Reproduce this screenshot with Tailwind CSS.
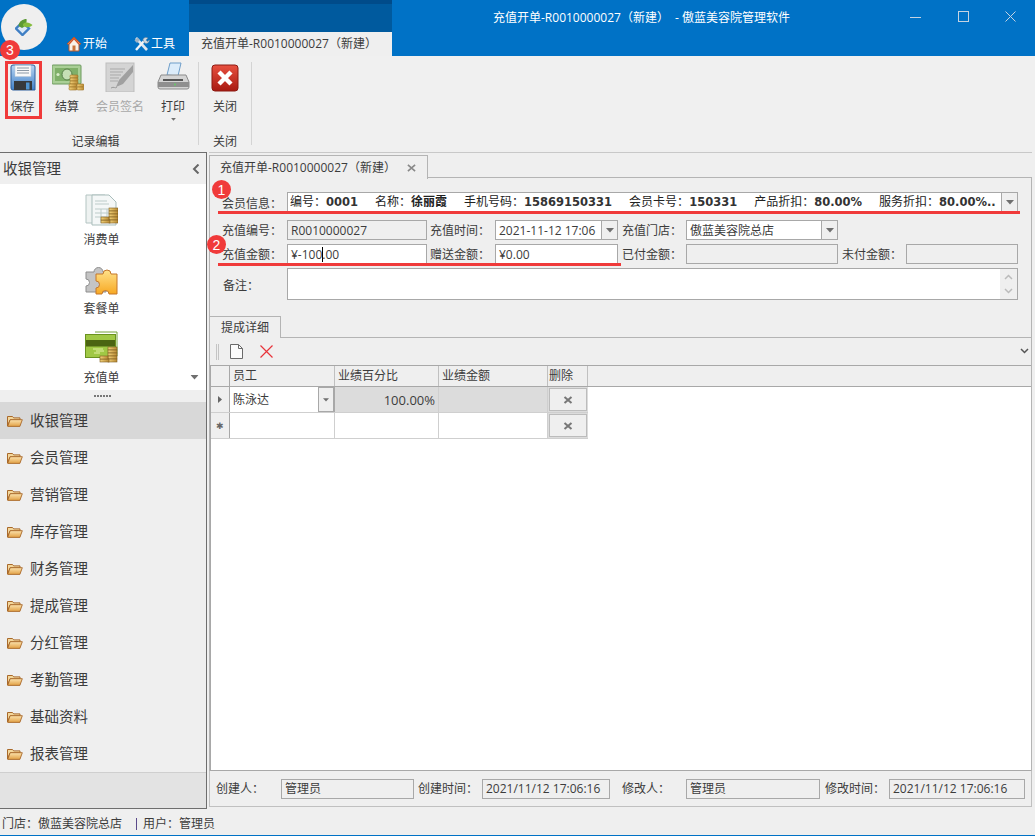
<!DOCTYPE html>
<html lang="zh-CN">
<head>
  <meta charset="UTF-8">
  <title>充值开单</title>
  <script src="https://cdn.jsdelivr.net/npm/@tailwindcss/browser@4"></script>
</head>
<body class="m-0">
  <!-- shared icons -->
  <svg class="absolute w-0 h-0">
    <defs>
      <linearGradient id="folderFront" x1="0" y1="0" x2="0" y2="1"><stop offset="0" stop-color="#fbe3ae"/><stop offset="1" stop-color="#e2a044"/></linearGradient>
      <linearGradient id="coin" x1="0" y1="0" x2="1" y2="0"><stop offset="0" stop-color="#f2d27a"/><stop offset="1" stop-color="#b98a34"/></linearGradient>
      <linearGradient id="floppy" x1="0" y1="0" x2="0" y2="1"><stop offset="0" stop-color="#b9d6f2"/><stop offset="1" stop-color="#3f7fc8"/></linearGradient>
      <linearGradient id="redBtn" x1="0" y1="0" x2="0" y2="1"><stop offset="0" stop-color="#e8503f"/><stop offset="1" stop-color="#a81a12"/></linearGradient>
      <linearGradient id="gold" x1="0" y1="0" x2="0" y2="1"><stop offset="0" stop-color="#ffe28a"/><stop offset="1" stop-color="#f7a823"/></linearGradient>
      <symbol id="folder" viewBox="0 0 16 12">
        <path d="M.5 1.5h5l1.2 1.4h6.3v2H3L.5 11z" fill="#f3d79c" stroke="#a9692a"/>
        <path d="M.7 11.4 3.2 4.7h12.1l-2.4 6.7z" fill="url(#folderFront)" stroke="#a9692a" stroke-width=".9"/>
      </symbol>
      <symbol id="dropArrow" viewBox="0 0 8 5"><path d="M0 0h8L4 4.5z" fill="#6f6f6f"/></symbol>
      <symbol id="rowX" viewBox="0 0 10 8"><path d="M1.5 1 8.5 7M8.5 1 1.5 7" stroke="#777" stroke-width="2"/></symbol>
    </defs>
  </svg>

  <div class="relative w-[1035px] h-[836px] overflow-hidden flex flex-col bg-[#efefef] text-[#3c3c3c] text-[12px] leading-[16px] font-['Open_Sans','Noto_Sans_CJK_SC',sans-serif]">

    <!-- title bar -->
    <div class="h-[56px] shrink-0 bg-[#0072c6] flex text-white">
      <div class="w-[189px] shrink-0 flex items-end pb-[1px]">
        <div class="ml-[66px] w-[67px] h-[22px] flex items-center gap-[1px]">
          <svg class="w-[16px] h-[16px]" viewBox="0 0 16 16">
            <path d="M8 1 1 8h2v7h10V8h2z" fill="#f7f3ea" stroke="#b5562a"/>
            <path d="M3 8 8 2.5 13 8" fill="none" stroke="#d2552a" stroke-width="1.6"/>
            <rect x="6.5" y="9.5" width="3" height="5.5" fill="#c9743a"/>
          </svg>
          <span>开始</span>
        </div>
        <div class="w-[56px] h-[22px] flex items-center gap-[1px]">
          <svg class="w-[17px] h-[16px]" viewBox="0 0 17 16">
            <path d="M3 2 14 14" stroke="#dfe6ee" stroke-width="2.6"/>
            <path d="M1.5 4.5 4.5 1.5 7 4 4 7z" fill="#9fb4c6"/>
            <path d="M3 14 11 5" stroke="#f0f4f8" stroke-width="2.4"/>
            <path d="M10 3.5a3.2 3.2 0 0 1 5-1.4l-2 2 1.4 1.4 2-1.5a3.2 3.2 0 0 1-5 2.8z" fill="#cfd9e2" stroke="#6d8193" stroke-width=".5"/>
          </svg>
          <span>工具</span>
        </div>
      </div>
      <div class="w-[203px] shrink-0 flex flex-col">
        <div class="h-[4px] bg-[#004b8a]"></div>
        <div class="h-[28px] bg-[#005a9e]"></div>
        <div class="h-[24px] bg-[#efefef] text-[#3c3c3c] pl-[12px] flex items-center">充值开单-R0010000027（新建）</div>
      </div>
      <div class="flex-1 relative">
        <div class="pl-[101px] pt-[10px] whitespace-pre">充值开单-R0010000027（新建）  - 傲蓝美容院管理软件</div>
      </div>
      <div class="absolute top-0 right-0 flex">
        <div class="w-[50px] h-[32px] flex items-center justify-center"><svg class="w-[11px] h-[11px]" viewBox="0 0 11 11"><path d="M0 6.5h11" stroke="#c5d3e2"/></svg></div>
        <div class="w-[46px] h-[32px] flex items-center justify-center"><svg class="w-[11px] h-[11px]" viewBox="0 0 11 11"><rect x=".5" y=".5" width="10" height="10" fill="none" stroke="#c5d3e2"/></svg></div>
        <div class="w-[49px] h-[32px] flex items-center justify-center"><svg class="w-[11px] h-[11px]" viewBox="0 0 11 11"><path d="M.5.5l10 10M10.5.5l-10 10" stroke="#c5d3e2"/></svg></div>
      </div>
    </div>

    <!-- ribbon -->
    <div class="h-[94px] shrink-0 flex bg-[#f0f0f0] relative">
      <div class="w-[199px] shrink-0 flex flex-col border-r border-[#d4d4d4] mb-[5px] mt-[6px]">
        <div class="flex h-[72px] shrink-0">
          <div class="w-[44px] flex flex-col items-center pl-[1px] pt-[2px]">
            <svg class="w-[28px] h-[28px]" viewBox="0 0 28 28">
              <path d="M2 3a2 2 0 0 1 2-2h20a2 2 0 0 1 2 2v23H4a2 2 0 0 1-2-2z" fill="url(#floppy)" stroke="#2f5f9c"/>
              <rect x="6" y="1.5" width="16" height="11" fill="#f8f8f8" stroke="#b9c7d6" stroke-width=".5"/>
              <path d="M8 4h12M8 6.5h12M8 9h12" stroke="#8c99a6"/>
              <rect x="5" y="17" width="18" height="9" fill="#37393c"/>
              <rect x="17" y="18.5" width="3.5" height="7" fill="#4f93cf"/>
            </svg>
            <span class="mt-[7px]">保存</span>
          </div>
          <div class="w-[46px] flex flex-col items-center pt-[2px]">
            <svg class="w-[32px] h-[28px] ml-[2px]" viewBox="0 0 32 28">
              <rect x="0" y="1" width="29" height="19" rx="1" fill="#a9cf96" stroke="#6c9a5e"/>
              <rect x="3" y="4" width="23" height="13" fill="#7fb069"/>
              <ellipse cx="15" cy="10.5" rx="5" ry="5.5" fill="#c6dfb5" stroke="#567f47"/>
              <circle cx="6" cy="10.5" r="1.6" fill="#d8ecc9"/>
              <g fill="url(#coin)" stroke="#9a6f22" stroke-width=".6">
                <rect x="18" y="11" width="8" height="3" rx="1"/><rect x="18" y="14" width="8" height="3" rx="1"/><rect x="18" y="17" width="8" height="3" rx="1"/><rect x="17" y="20" width="8" height="3" rx="1"/><rect x="17" y="23" width="8" height="3" rx="1"/>
                <rect x="25" y="20" width="7" height="3" rx="1"/><rect x="25" y="23" width="7" height="3" rx="1"/>
              </g>
            </svg>
            <span class="mt-[7px]">结算</span>
          </div>
          <div class="w-[60px] flex flex-col items-center text-[#a8a8a8]">
            <svg class="w-[30px] h-[30px]" viewBox="0 0 30 30">
              <rect x="1" y="1" width="28" height="29" fill="#d4d4d4" stroke="#bdbdbd"/>
              <path d="M5 7h15M5 10h13M5 13h11M5 16h9M5 19h8" stroke="#a9a9a9"/>
              <path d="M28 3 14 18l-3 7 7-3L28 10z" fill="#a0a0a0"/>
              <path d="M6 26c3-2 4 1 6-1" fill="none" stroke="#9a9a9a"/>
            </svg>
            <span class="mt-[7px]">会员签名</span>
          </div>
          <div class="w-[46px] flex flex-col items-center">
            <svg class="w-[33px] h-[30px]" viewBox="0 0 33 30">
              <path d="M10 13 13 1h11l-3 13z" fill="#dcecfa" stroke="#6f9ec9"/>
              <path d="M4 13h25l3 7v5a2 2 0 0 1-2 2H3a2 2 0 0 1-2-2v-5z" fill="#d4d4d4" stroke="#8b8b8b"/>
              <path d="M1 20h31v5H1z" fill="#8f8f8f"/>
              <rect x="6" y="17" width="20" height="2" fill="#555"/>
              <rect x="17" y="21.5" width="2" height="2" fill="#6cc06c"/>
            </svg>
            <span class="mt-[7px]">打印</span>
            <svg class="w-[5px] h-[3px] mt-[3px]" viewBox="0 0 8 5"><use href="#dropArrow"/></svg>
          </div>
        </div>
        <div class="text-center pr-[7px]">记录编辑</div>
      </div>
      <div class="w-[53px] shrink-0 flex flex-col border-r border-[#d4d4d4] mb-[5px] mt-[6px]">
        <div class="h-[72px] shrink-0 flex flex-col items-center pt-[2px]">
          <svg class="w-[28px] h-[28px]" viewBox="0 0 28 28">
            <rect x="1" y="1" width="26" height="26" rx="3" fill="url(#redBtn)" stroke="#8c1a12"/>
            <path d="M8 8 20 20M20 8 8 20" stroke="#fff" stroke-width="4.4"/>
          </svg>
          <span class="mt-[7px]">关闭</span>
        </div>
        <div class="text-center">关闭</div>
      </div>
    </div>

    <!-- main -->
    <div class="h-[662px] shrink-0 flex">

      <!-- left nav -->
      <div class="w-[207px] shrink-0 flex flex-col mt-[2px] h-[657px] border-t border-r border-b border-[#6e6e6e]">
        <div class="h-[31px] shrink-0 flex items-center justify-between pl-[3px] pr-[6px] text-[14.5px]">
          <span>收银管理</span>
          <svg class="w-[8px] h-[10px]" viewBox="0 0 8 10"><path d="M6.5.5 2 5l4.5 4.5" fill="none" stroke="#666" stroke-width="2"/></svg>
        </div>
        <div class="h-[206px] shrink-0 bg-white relative flex flex-col items-center pr-[3px]">
          <div class="h-[69px] flex flex-col items-center pt-[9px]">
            <svg class="w-[33px] h-[33px]" viewBox="0 0 33 33">
              <path d="M1 2h19l4 4v24H1z" fill="#eef2f1" stroke="#b3c4c2"/>
              <path d="M7 2h17l7 7v23H7z" fill="#f4f7f7" stroke="#a9bdbb"/>
              <path d="M10 8h12M10 11h14M10 16h18M10 20h18M10 24h12M16 16v14M22 16v8" stroke="#bccbc9"/>
              <g fill="url(#coin)" stroke="#7d5c1f" stroke-width=".6">
                <rect x="24" y="15" width="9" height="3"/><rect x="24" y="18" width="9" height="3"/><rect x="24" y="21" width="9" height="3"/><rect x="24" y="24" width="9" height="3"/><rect x="24" y="27" width="9" height="3"/>
                <rect x="16" y="27" width="9" height="3"/><rect x="16" y="24" width="8" height="3"/>
              </g>
            </svg>
            <span class="mt-[6px]">消费单</span>
          </div>
          <div class="h-[69px] flex flex-col items-center pt-[9px]">
            <svg class="w-[33px] h-[33px]" viewBox="0 0 33 33">
              <path d="M1 10h8a4.500 4.500 0 1 1 9 0h3v20H1v-6a3 3 0 1 0 0-7z" fill="#c4c4c4" stroke="#8e8e8e"/>
              <path d="M11 12h7a4 4 0 1 1 8 0h6v20h-8a3.500 3.500 0 0 0-7 0h-6v-6a3.500 3.500 0 1 0 0-7z" fill="url(#gold)" stroke="#c4772a"/>
            </svg>
            <span class="mt-[6px]">套餐单</span>
          </div>
          <div class="h-[68px] flex flex-col items-center pt-[9px]">
            <svg class="w-[33px] h-[33px]" viewBox="0 0 33 33">
              <path d="M10 1h22v24" fill="none" stroke="#74a23a"/>
              <rect x=".5" y="3.500" width="30" height="23" fill="#a0c845" stroke="#6b9220"/>
              <rect x="1" y="9" width="29" height="6.500" fill="#4b6412"/>
              <path d="M8 18h10M11 20h8M9 22h6" stroke="#e3f0a5"/>
              <g fill="url(#coin)" stroke="#7d5c1f" stroke-width=".6">
                <rect x="23" y="16" width="9" height="3"/><rect x="23" y="19" width="9" height="3"/><rect x="23" y="22" width="9" height="3"/><rect x="23" y="25" width="9" height="3"/><rect x="23" y="28" width="9" height="3"/>
                <rect x="15" y="28" width="9" height="3"/><rect x="15" y="25" width="8" height="3"/>
              </g>
            </svg>
            <span class="mt-[6px]">充值单</span>
          </div>
          <svg class="absolute right-[7px] bottom-[10px] w-[9px] h-[5px]" viewBox="0 0 8 5"><use href="#dropArrow"/></svg>
        </div>
        <div class="h-[12px] shrink-0 flex items-center justify-center gap-[1px] pr-[2px]">
          <i class="w-[2px] h-[2px] bg-[#777]"></i><i class="w-[2px] h-[2px] bg-[#777]"></i><i class="w-[2px] h-[2px] bg-[#777]"></i><i class="w-[2px] h-[2px] bg-[#777]"></i><i class="w-[2px] h-[2px] bg-[#777]"></i><i class="w-[2px] h-[2px] bg-[#777]"></i>
        </div>
        <div class="text-[14.5px] flex flex-col">
          <div class="h-[37px] flex items-center pl-[7px] gap-[7px] bg-[#d8d8d8]"><svg class="w-[16px] h-[12px]"><use href="#folder"/></svg>收银管理</div>
          <div class="h-[37px] flex items-center pl-[7px] gap-[7px]"><svg class="w-[16px] h-[12px]"><use href="#folder"/></svg>会员管理</div>
          <div class="h-[37px] flex items-center pl-[7px] gap-[7px]"><svg class="w-[16px] h-[12px]"><use href="#folder"/></svg>营销管理</div>
          <div class="h-[37px] flex items-center pl-[7px] gap-[7px]"><svg class="w-[16px] h-[12px]"><use href="#folder"/></svg>库存管理</div>
          <div class="h-[37px] flex items-center pl-[7px] gap-[7px]"><svg class="w-[16px] h-[12px]"><use href="#folder"/></svg>财务管理</div>
          <div class="h-[37px] flex items-center pl-[7px] gap-[7px]"><svg class="w-[16px] h-[12px]"><use href="#folder"/></svg>提成管理</div>
          <div class="h-[37px] flex items-center pl-[7px] gap-[7px]"><svg class="w-[16px] h-[12px]"><use href="#folder"/></svg>分红管理</div>
          <div class="h-[37px] flex items-center pl-[7px] gap-[7px]"><svg class="w-[16px] h-[12px]"><use href="#folder"/></svg>考勤管理</div>
          <div class="h-[37px] flex items-center pl-[7px] gap-[7px]"><svg class="w-[16px] h-[12px]"><use href="#folder"/></svg>基础资料</div>
          <div class="h-[37px] flex items-center pl-[7px] gap-[7px]"><svg class="w-[16px] h-[12px]"><use href="#folder"/></svg>报表管理</div>
        </div>
        <div class="flex-1 bg-[#e3e3e3] border-t border-[#cfcfcf]"></div>
      </div>

      <!-- right document -->
      <div class="ml-[2px] flex-1 flex flex-col min-w-0 mr-[3px] border-t border-[#c8c8c8] mt-[2px] h-[656px]">
        <div class="h-[25px] shrink-0 pt-[2px] flex">
          <div class="w-[219px] h-[24px] border border-b-0 border-[#b4b4b4] flex items-center pl-[10px] gap-[11px] bg-[#efefef] relative z-10">
            <span>充值开单-R0010000027（新建）</span>
            <svg class="w-[9px] h-[8px]" viewBox="0 0 10 8"><path d="M1 .5 9 7.500M9 .5 1 7.500" stroke="#888" stroke-width="1.800"/></svg>
          </div>
        </div>
        <div class="h-[594px] flex flex-col border-t border-l border-r border-[#b4b4b4] -mt-[1px]">
          <!-- form -->
          <div class="pt-[14px] pl-[12px] flex flex-col shrink-0">
            <div class="flex h-[20px] items-center">
              <span class="w-[65px] pt-[4px]">会员信息：</span>
              <div class="w-[731px] h-[20px] bg-white border border-[#a8a8a8] flex">
                <div class="flex-1 flex items-center pl-[2px] gap-[17px] whitespace-nowrap overflow-hidden text-[#222]">
                  <span>编号：<b class="font-['DejaVu_Sans',sans-serif] text-[11.5px] text-[#333]">0001</b></span>
                  <span>名称：<b>徐丽霞</b></span>
                  <span>手机号码：<b class="font-['DejaVu_Sans',sans-serif] text-[11.5px] text-[#333]">15869150331</b></span>
                  <span>会员卡号：<b class="font-['DejaVu_Sans',sans-serif] text-[11.5px] text-[#333]">150331</b></span>
                  <span>产品折扣：<b class="font-['DejaVu_Sans',sans-serif] text-[11.5px] text-[#333]">80.00%</b></span>
                  <span>服务折扣：<b class="font-['DejaVu_Sans',sans-serif] text-[11.5px] text-[#333]">80.00%..</b></span>
                </div>
                <div class="w-[16px] bg-[#efefef] border-l border-[#a8a8a8] flex items-center justify-center"><svg class="w-[8px] h-[5px]"><use href="#dropArrow"/></svg></div>
              </div>
            </div>
            <div class="flex h-[20px] items-center mt-[8px]">
              <span class="w-[65px] pt-[2px]">充值编号：</span>
              <div class="w-[140px] h-[20px] border border-[#a8a8a8] pl-[3px] pt-[1px] flex items-center">R0010000027</div>
              <span class="w-[65px] ml-[3px] pt-[2px]">充值时间：</span>
              <div class="w-[123px] h-[20px] bg-white border border-[#a8a8a8] flex">
                <div class="flex-1 pl-[3px] pt-[1px] flex items-center whitespace-nowrap">2021-11-12 17:06</div>
                <div class="w-[16px] bg-[#efefef] border-l border-[#a8a8a8] flex items-center justify-center"><svg class="w-[8px] h-[5px]"><use href="#dropArrow"/></svg></div>
              </div>
              <span class="w-[64px] ml-[4px] pt-[2px]">充值门店：</span>
              <div class="w-[152px] h-[20px] bg-white border border-[#a8a8a8] flex">
                <div class="flex-1 pl-[3px] pt-[1px] flex items-center">傲蓝美容院总店</div>
                <div class="w-[16px] bg-[#efefef] border-l border-[#a8a8a8] flex items-center justify-center"><svg class="w-[8px] h-[5px]"><use href="#dropArrow"/></svg></div>
              </div>
            </div>
            <div class="flex h-[20px] items-center mt-[4px]">
              <span class="w-[65px] pt-[2px]">充值金额：</span>
              <div class="w-[140px] h-[20px] bg-white border border-[#a8a8a8] pl-[3px] pt-[1px] flex items-center relative">¥-100.00<i class="absolute left-[34px] top-[2px] w-px h-[15px] bg-black"></i></div>
              <span class="w-[65px] ml-[3px] pt-[2px]">赠送金额：</span>
              <div class="w-[123px] h-[20px] bg-white border border-[#a8a8a8] pl-[3px] pt-[1px] flex items-center">¥0.00</div>
              <span class="w-[64px] ml-[4px] pt-[2px]">已付金额：</span>
              <div class="w-[152px] h-[20px] border border-[#a8a8a8]"></div>
              <span class="w-[64px] ml-[4px] pt-[2px]">未付金额：</span>
              <div class="w-[112px] h-[20px] border border-[#a8a8a8]"></div>
            </div>
            <div class="flex h-[32px] mt-[4px]">
              <span class="w-[65px] pt-[10px] pl-[1px]">备注：</span>
              <div class="w-[731px] h-[32px] bg-white border border-[#a8a8a8] flex justify-end">
                <div class="w-[17px] bg-[#efefef] flex flex-col items-center justify-between py-[5px]">
                  <svg class="w-[9px] h-[6px]" viewBox="0 0 9 6"><path d="M1 5 4.500 1.500 8 5" fill="none" stroke="#bbb" stroke-width="1.500"/></svg>
                  <svg class="w-[9px] h-[6px]" viewBox="0 0 9 6"><path d="M1 1 4.500 4.500 8 1" fill="none" stroke="#bbb" stroke-width="1.500"/></svg>
                </div>
              </div>
            </div>
          </div>

          <!-- detail tab -->
          <div class="mt-[16px] shrink-0 h-[22px] border-b border-[#b4b4b4] flex">
            <div class="w-[71px] h-[22px] border-t border-r border-[#b4b4b4] flex items-center justify-center bg-[#efefef]">提成详细</div>
          </div>
          <div class="shrink-0 h-[27px] flex items-center relative">
            <i class="ml-[6px] w-[3px] h-[16px] border-l border-r border-[#c4c4c4]"></i>
            <svg class="ml-[11px] w-[13px] h-[15px]" viewBox="0 0 13 15"><path d="M.5.5h8l4 4v10H.5z" fill="#fbfbfb" stroke="#6a6a6a"/><path d="M8.500.5v4h4" fill="none" stroke="#6a6a6a"/></svg>
            <svg class="ml-[17px] w-[13px] h-[13px]" viewBox="0 0 13 13"><path d="M.5.500l12 12M12.500.500l-12 12" stroke="#e8333a" stroke-width="1.200"/></svg>
            <svg class="absolute right-[2px] top-[10px] w-[9px] h-[6px]" viewBox="0 0 9 6"><path d="M1 1 4.500 4.500 8 1" fill="none" stroke="#555" stroke-width="1.500"/></svg>
          </div>

          <!-- grid -->
          <div class="flex-1 bg-white border-t border-l border-b border-[#a8a8a8] min-h-0">
            <div class="flex h-[21px] bg-[#efefef] border-b border-[#a8a8a8]">
              <div class="w-[19px] border-r border-[#a8a8a8]"></div>
              <div class="w-[105px] border-r border-[#c0c0c0] pl-[3px] flex items-center">员工</div>
              <div class="w-[104px] border-r border-[#c0c0c0] pl-[3px] flex items-center">业绩百分比</div>
              <div class="w-[109px] border-r border-[#c0c0c0] pl-[3px] flex items-center">业绩金额</div>
              <div class="w-[40px] border-r border-[#c0c0c0] pl-[1px] flex items-center">删除</div>
              <div class="flex-1"></div>
            </div>
            <div class="flex w-[377px] h-[26px] border-b border-[#cfcfcf]">
              <div class="w-[19px] bg-[#efefef] border-r border-[#a8a8a8] flex items-center justify-center"><svg class="w-[4px] h-[7px]" viewBox="0 0 4 7"><path d="M0 0 4 3.500 0 7z" fill="#666"/></svg></div>
              <div class="w-[105px] border-r border-[#a8a8a8] flex">
                <div class="flex-1 pl-[3px] pt-[1px] flex items-center">陈泳达</div>
                <div class="w-[16px] bg-[#efefef] border border-[#a8a8a8] flex items-center justify-center"><svg class="w-[6px] h-[4px]"><use href="#dropArrow"/></svg></div>
              </div>
              <div class="w-[104px] bg-[#dcdcdc] border-r border-[#cfcfcf] pr-[3px] pt-[1px] text-[13px] flex items-center justify-end">100.00%</div>
              <div class="w-[109px] bg-[#dcdcdc] border-r border-[#cfcfcf]"></div>
              <div class="w-[40px] bg-[#dcdcdc] p-[1px]"><div class="h-full bg-[#efefef] border border-[#bcbcbc] flex items-center justify-center"><svg class="w-[10px] h-[8px]"><use href="#rowX"/></svg></div></div>
            </div>
            <div class="flex w-[377px] h-[26px] border-b border-[#cfcfcf]">
              <div class="w-[19px] bg-[#efefef] border-r border-[#a8a8a8] flex items-center justify-center text-[9px] text-[#666]">✱</div>
              <div class="w-[105px] border-r border-[#cfcfcf]"></div>
              <div class="w-[104px] border-r border-[#cfcfcf]"></div>
              <div class="w-[109px] border-r border-[#cfcfcf]"></div>
              <div class="w-[40px] bg-[#dcdcdc] p-[1px]"><div class="h-full bg-[#efefef] border border-[#bcbcbc] flex items-center justify-center"><svg class="w-[10px] h-[8px]"><use href="#rowX"/></svg></div></div>
            </div>
          </div>
        </div>

        <!-- audit footer -->
        <div class="h-[36px] shrink-0 flex items-center pl-[6px] border border-t-0 border-[#c0c0c0]">
          <span class="w-[65px] pt-[1px]">创建人：</span>
          <div class="w-[133px] h-[20px] border border-[#a8a8a8] pl-[3px] flex items-center">管理员</div>
          <span class="w-[64px] ml-[4px] pt-[1px]">创建时间：</span>
          <div class="w-[128px] h-[20px] border border-[#a8a8a8] pl-[3px] flex items-center whitespace-nowrap">2021/11/12 17:06:16</div>
          <span class="w-[64px] ml-[12px] pt-[1px]">修改人：</span>
          <div class="w-[134px] h-[20px] border border-[#a8a8a8] pl-[3px] flex items-center">管理员</div>
          <span class="w-[64px] ml-[5px] pt-[1px]">修改时间：</span>
          <div class="w-[136px] h-[20px] border border-[#a8a8a8] pl-[3px] flex items-center whitespace-nowrap">2021/11/12 17:06:16</div>
        </div>
      </div>
    </div>

    <!-- status bar -->
    <div class="h-[24px] shrink-0 flex items-center pl-[2px] pt-[1px] border-b border-[#0072c6]">
      <span>门店：傲蓝美容院总店</span>
      <i class="ml-[14px] mr-[6px] w-px h-[12px] bg-[#5b4a8a]"></i>
      <span>用户：管理员</span>
    </div>

    <!-- logo orb -->
    <div class="absolute left-[1px] top-[4px] w-[46px] h-[46px] rounded-full bg-[#efefef] flex items-center justify-center">
      <svg class="w-[18px] h-[18px]" viewBox="0 0 18 18">
        <path d="M7.500 4 1 10.500 7.500 17 14 10.500z" fill="#dbe8f5" stroke="#3f7fc4" stroke-width="2.400"/>
        <path d="M3.500 8C4 3 8 1 11.500 1c.5 3-.5 7-4.500 9z" fill="#5c9a34"/>
        <path d="M8 6c3-2.500 6.500-1.500 9.500 1-2.500 2.500-6 3-9.500 1z" fill="#84bc3e"/>
      </svg>
    </div>

    <!-- tutorial markup drawn over the screenshot -->
    <div class="absolute left-[5px] top-[61px] w-[37px] h-[58px] border-[3px] border-[#f03a3a]"></div>
    <div class="absolute left-[0px] top-[40px] w-[20px] h-[20px] rounded-full bg-[#f03a3a] text-white flex items-center justify-center font-['Liberation_Sans',sans-serif] text-[14px]">3</div>
    <div class="absolute left-[212px] top-[180px] w-[19px] h-[19px] rounded-full bg-[#f03a3a] text-white flex items-center justify-center font-['Liberation_Sans',sans-serif] text-[14px]">1</div>
    <div class="absolute left-[207px] top-[235px] w-[19px] h-[19px] rounded-full bg-[#f03a3a] text-white flex items-center justify-center font-['Liberation_Sans',sans-serif] text-[14px]">2</div>
    <div class="absolute left-[218px] top-[211px] w-[802px] h-[3px] bg-[#f03a3a]"></div>
    <div class="absolute left-[218px] top-[263px] w-[403px] h-[3px] bg-[#f03a3a]"></div>
  </div>
</body>
</html>
